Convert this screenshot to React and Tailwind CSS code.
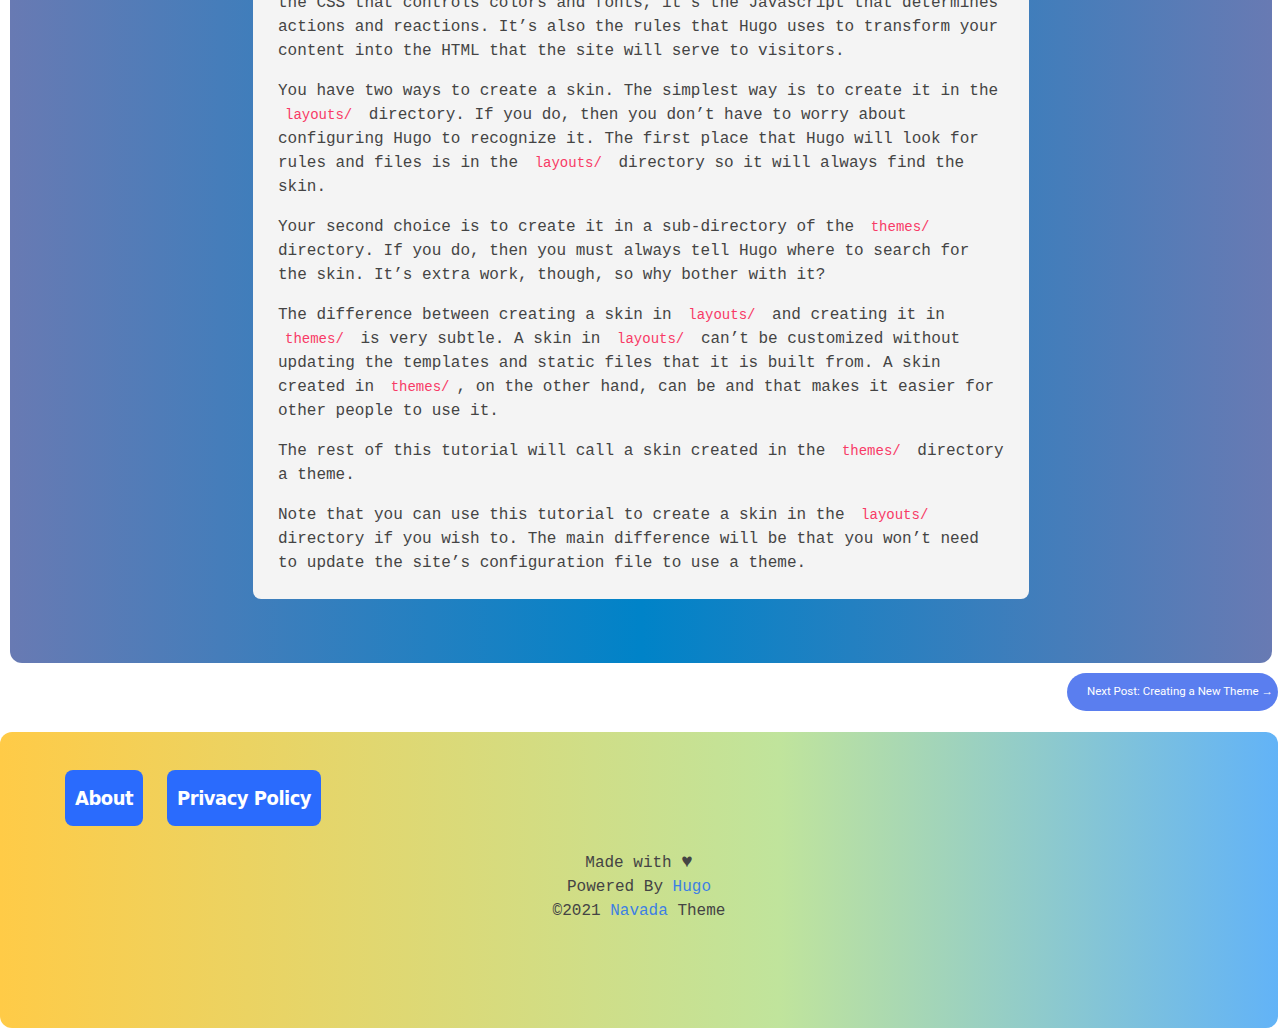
import React from "react";

const mono = "font-['Liberation_Mono','DejaVu_Sans_Mono',monospace]";

const C = ({ children }) => (
  <code className={`${mono} text-[14px] text-[#f83a66] px-[7px]`}>{children}</code>
);

export default function App() {
  return (
    <div className="bg-white min-h-screen overflow-hidden">
      <div className="-mt-[9px]">
        <div className="ml-[10px] w-[1262px] rounded-b-xl bg-[linear-gradient(to_right,#687ab3,#0083c8,#687ab3)] pb-[64px]">
          <div
            className={`mx-auto w-[776px] rounded-b-lg bg-[#f4f4f4] px-[25px] pb-[24px] ${mono} text-[16px] leading-[24px] text-[#444444]`}
          >
            <p className="mb-4">
              the CSS that controls colors and fonts, it’s the Javascript that determines actions and
              reactions. It’s also the rules that Hugo uses to transform your content into the HTML that
              the site will serve to visitors.
            </p>
            <p className="mb-4">
              You have two ways to create a skin. The simplest way is to create it in the <C>layouts/</C>{" "}
              directory. If you do, then you don’t have to worry about configuring Hugo to recognize it.
              The first place that Hugo will look for rules and files is in the <C>layouts/</C> directory
              so it will always find the skin.
            </p>
            <p className="mb-4">
              Your second choice is to create it in a sub-directory of the <C>themes/</C> directory. If you
              do, then you must always tell Hugo where to search for the skin. It’s extra work, though, so
              why bother with it?
            </p>
            <p className="mb-4">
              The difference between creating a skin in <C>layouts/</C> and creating it in <C>themes/</C>{" "}
              is very subtle. A skin in <C>layouts/</C> can’t be customized without updating the templates
              and static files that it is built from. A skin created in <C>themes/</C>, on the other hand,
              can be and that makes it easier for other people to use it.
            </p>
            <p className="mb-4">
              The rest of this tutorial will call a skin created in the <C>themes/</C> directory a theme.
            </p>
            <p>
              Note that you can use this tutorial to create a skin in the <C>layouts/</C> directory if you
              wish to. The main difference will be that you won’t need to update the site’s configuration
              file to use a theme.
            </p>
          </div>
        </div>

        <div className="mt-[10px] flex justify-end">
          <a
            href="#"
            className="flex h-[38px] w-[211px] items-center rounded-full bg-[#5a7eef] pl-5 font-['Roboto',sans-serif] text-[11.5px] text-white"
          >
            Next Post: Creating a New Theme →
          </a>
        </div>

        <footer className="mt-[21px] h-[296px] rounded-xl bg-[linear-gradient(to_right,#ffcb47,#c0e49c_61%,#62b3f7)] pt-[38px]">
          <div className="flex gap-6 pl-[65px]">
            <a
              href="#"
              className="flex h-14 items-center rounded-lg bg-[#2a6bfd] px-[10px] font-['DejaVu_Sans',sans-serif] font-bold font-stretch-condensed text-[20px] tracking-[-0.5px] text-white"
            >
              About
            </a>
            <a
              href="#"
              className="flex h-14 items-center rounded-lg bg-[#2a6bfd] px-[10px] font-['DejaVu_Sans',sans-serif] font-bold font-stretch-condensed text-[20px] tracking-[-0.5px] text-white"
            >
              Privacy Policy
            </a>
          </div>
          <div className={`mt-[25px] text-center ${mono} text-[16px] leading-[24px] text-[#444444]`}>
            <div>
              Made with <span className="text-[19px] leading-none">♥</span>
            </div>
            <div>
              Powered By <a href="#" className="text-[#3d7fe3]">Hugo</a>
            </div>
            <div>
              ©2021 <a href="#" className="text-[#3d7fe3]">Navada</a> Theme
            </div>
          </div>
        </footer>
      </div>
    </div>
  );
}
